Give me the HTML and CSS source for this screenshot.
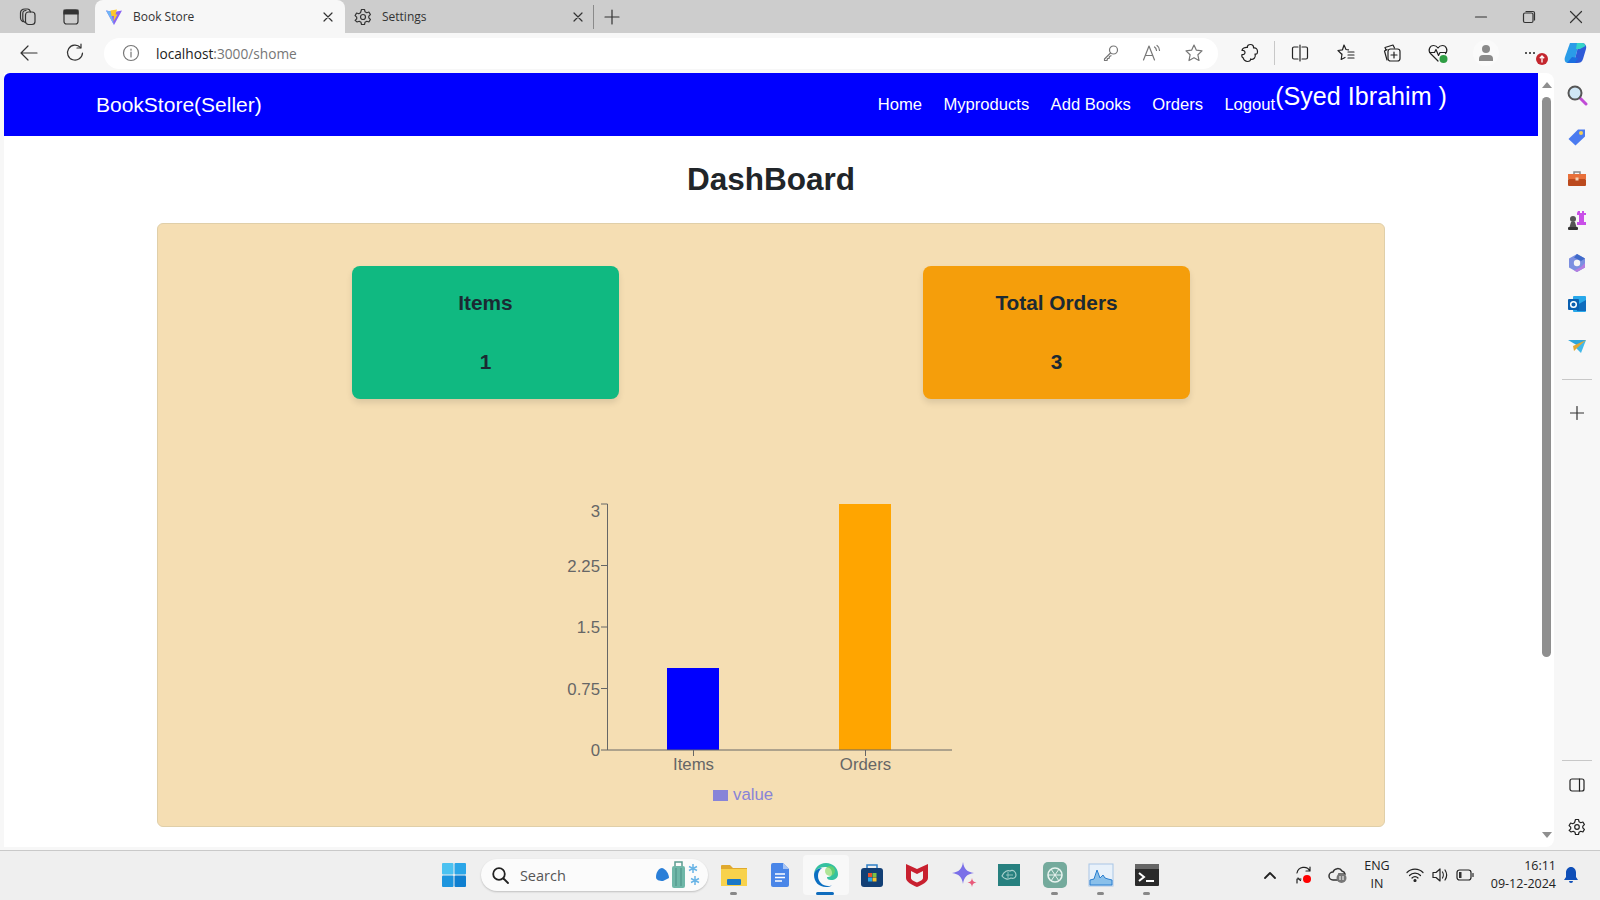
FILE: index.html
```html
<!DOCTYPE html>
<html lang="en">
<head>
    <meta charset="UTF-8">
    <meta name="viewport" content="width=device-width, initial-scale=1.0">
    <title>Book Store</title>
    <link rel="stylesheet" href="styles.css">
</head>
<body>
    <!-- tab strip -->
    <div class="tabstrip">
        <div class="cell-strip first">
            <svg class="ico" width="20" height="20" viewBox="0 0 20 20"><rect x="7.500" y="5" width="9.500" height="12.500" rx="3"/><path d="M7.500 15.500C5.500 15 4.800 13.500 4.800 12V6.500C4.800 4.500 6 3.500 8 3.500"/><path d="M4.500 14.500C3 13.500 2.500 12.500 2.500 11V6C2.500 3.500 4.500 2 7 2h2.500c1.500 0 2.500 1 3 3"/></svg>
        </div>
        <div class="cell-strip">
            <svg class="ico" width="20" height="20" viewBox="0 0 20 20"><rect x="3" y="3" width="14" height="14" rx="2.500"/><rect x="3" y="3" width="14" height="4" fill="#333"/></svg>
        </div>
        <div class="tab active">
            <svg width="18" height="18" viewBox="0 0 18 18"><path d="M1 2.500L9 4l8-1.500L9 17z" fill="#8a63f2"/><path d="M1 2.500L6 3.400 9 17z" fill="#6fb5f5"/><path d="M5.500 2.500L12 1.500 10.500 6.500H12.500L8.500 13.500 9 8H6.500z" fill="#fcc72b"/></svg>
            <span class="tab-title">Book Store</span>
            <svg class="ico tab-close" width="12" height="12" viewBox="0 0 12 12"><path d="M2 2l8 8M10 2l-8 8"/></svg>
        </div>
        <div class="tab">
            <svg class="ico" width="18" height="18" viewBox="0 0 18 18"><path d="M7.500 1.500h3l.5 2.200 1.800 1 2.100-.7 1.500 2.600-1.600 1.500v1.800l1.600 1.500-1.500 2.600-2.100-.7-1.800 1-.5 2.200h-3l-.5-2.200-1.800-1-2.100.7L1.100 12.400l1.600-1.500V9.100L1.100 7.600l1.500-2.600 2.100.7 1.800-1z"/><circle cx="9" cy="9" r="2.500"/></svg>
            <span class="tab-title">Settings</span>
            <svg class="ico tab-close" width="12" height="12" viewBox="0 0 12 12"><path d="M2 2l8 8M10 2l-8 8"/></svg>
        </div>
        <div class="tab-sep"></div>
        <svg class="ico tab-plus" width="16" height="16" viewBox="0 0 16 16"><path d="M8 1v14M1 8h14"/></svg>
        <div class="win-controls">
            <svg class="ico" width="14" height="14" viewBox="0 0 14 14"><path d="M1.500 7h11"/></svg>
            <svg class="ico" width="14" height="14" viewBox="0 0 14 14"><rect x="1.500" y="3" width="9.500" height="9.500" rx="1.500"/><path d="M4 1.500h7a1.500 1.500 0 0 1 1.500 1.500v7"/></svg>
            <svg class="ico" width="14" height="14" viewBox="0 0 14 14"><path d="M1.500 1.500l11 11M12.500 1.500l-11 11"/></svg>
        </div>
    </div>

    <!-- address bar -->
    <div class="toolbar">
        <div class="cell">
            <svg class="ico" width="20" height="20" viewBox="0 0 20 20"><path d="M18 10H2.500M9 3l-7 7 7 7"/></svg>
        </div>
        <div class="cell">
            <svg class="ico" width="20" height="20" viewBox="0 0 20 20"><path d="M15.500 4.500A7.500 7.500 0 1 0 17.500 10"/><path d="M16 1v4h-4"/></svg>
        </div>
        <div class="address">
            <svg class="ico light" width="18" height="18" viewBox="0 0 18 18"><circle cx="9" cy="9" r="7.500"/><path d="M9 8v5M9 5v1.200"/></svg>
            <span class="addr-text"><span class="addr-host">localhost</span>:3000/shome</span>
            <div class="addr-icons">
                <svg class="ico light" width="18" height="18" viewBox="0 0 18 18"><circle cx="11.500" cy="6" r="4"/><path d="M8.500 9L2.500 15v1.500h2.500l.5-2h1.500l.5-2 1.500-.8"/></svg>
                <svg class="ico light" width="20" height="18" viewBox="0 0 20 18"><path d="M1.500 16L7 2l5.500 14M3.500 11.500h7M12.500 3c1.200 .8 1.800 2 2 3.500M15 1.500c1.500 1 2.500 3 2.500 5"/></svg>
                <svg class="ico light" width="20" height="20" viewBox="0 0 20 20"><path d="M10 2l2.400 5.200 5.600.7-4.100 3.900 1.100 5.700L10 14.700l-5 2.800 1.100-5.700L2 7.900l5.600-.7z"/></svg>
            </div>
        </div>
        <div class="cell">
            <svg class="ico dark" width="20" height="20" viewBox="0 0 20 20"><path d="M7.500 4.500C7 2.500 8.500 1.500 10.500 1.500s3.500 1.500 3 3.500c2.500-.5 4 1 4 3.500s-1 3-2.500 2.500c.5 1.500.5 3-.5 4s-2.500 2-4 1c.5 1.500-1 2.500-3 2.500S3 16.500 3.500 15C2 15 1.500 13 2 11.500 3.500 12 5 11 5 9.500S3.500 7 2 7.500C2 5.500 5 4 7.500 4.500z"/></svg>
        </div>
        <div class="tool-sep"></div>
        <div class="cell">
            <svg class="ico dark" width="20" height="20" viewBox="0 0 20 20"><path d="M8 4H4a1.500 1.500 0 0 0-1.500 1.500v9A1.500 1.500 0 0 0 4 16h4M12 4h4a1.500 1.500 0 0 1 1.500 1.500v9A1.500 1.500 0 0 1 16 16h-4M10 2v16"/></svg>
        </div>
        <div class="cell">
            <svg class="ico dark" width="20" height="20" viewBox="0 0 20 20"><path d="M8 2l2 4.500 2.500.3M6 11l-.8 5.500L9 14.500M5.500 11L2 7.500l4.500-.7L8 2M12 9h6M12 12h6M12 15h6"/></svg>
        </div>
        <div class="cell">
            <svg class="ico dark" width="20" height="20" viewBox="0 0 20 20"><path d="M4 7L3 4.500 11 2l1.500 3"/><path d="M5 17L2.500 8 5 6.500"/><rect x="6" y="6" width="12" height="12" rx="2.500"/><path d="M12 9v6M9 12h6"/></svg>
        </div>
        <div class="cell">
            <svg width="22" height="22" viewBox="0 0 22 22" class="ico dark"><path d="M11 19L3.500 11.500C.5 8 3 3.500 6.500 3.500c2 0 3.500 1 4.500 2.500 1-1.500 2.500-2.500 4.500-2.500 3.500 0 6 4.500 3 8"/><path d="M2.500 10.500h5l1.500-3 2.500 6 1.500-3h6"/><circle cx="16.500" cy="17" r="4" fill="#2f9e44" stroke="none"/></svg>
        </div>
        <div class="cell">
            <div class="avatar">
                <svg width="16" height="18" viewBox="0 0 16 18"><circle cx="8" cy="5" r="4" fill="#8a8a8a"/><path d="M1 17v-2a4 4 0 0 1 4-4h6a4 4 0 0 1 4 4v2z" fill="#8a8a8a"/></svg>
            </div>
        </div>
        <div class="cell">
            <span class="more-dots"></span>
            <svg class="more-badge" width="12" height="12" viewBox="0 0 12 12"><circle cx="6" cy="6" r="6" fill="#c4262e"/><path d="M6 9.500V3M3.800 5.200L6 3l2.200 2.200" fill="none" stroke="#fff" stroke-width="1.300"/></svg>
        </div>
        <div class="cell">
            <svg width="26" height="26" viewBox="0 0 26 26"><path d="M7 3h9l-5 20H5C2 23 1 20 2 17z" fill="#2a9ce8"/><path d="M16 3h3c3 0 5 3 4 6l-3 10c-1 3-3 4-6 4h-3z" fill="#2e5bd8"/><path d="M14 3h5c2 0 3 1 3.500 3L17 9h-4z" fill="#35d4c8"/><path d="M4 23h8l3-5-6-1z" fill="#1a6fe0"/></svg>
        </div>
    </div>

    <div class="window-body">
        <div class="page">
            <div class="content">
                <nav class="navbar">
                    <a class="brand">BookStore(Seller)</a>
                    <div class="nav-links">
                        <a>Home</a>
                        <a>Myproducts</a>
                        <a>Add Books</a>
                        <a>Orders</a>
                        <a>Logout</a>
                    </div>
                    <h2 class="nav-user">(Syed Ibrahim )</h2>
                </nav>

                <h1 class="page-title">DashBoard</h1>

                <div class="panel">
                    <div class="cards">
                        <div class="card green">
                            <h3>Items</h3>
                            <h3>1</h3>
                        </div>
                        <div class="card orange">
                            <h3>Total Orders</h3>
                            <h3>3</h3>
                        </div>
                    </div>

                    <svg class="chart" width="440" height="330" viewBox="0 0 440 330">
                        <rect x="137" y="178" width="52" height="82" fill="#0000ff"/>
                        <rect x="309" y="14" width="52" height="246" fill="#ffa500"/>
                        <path d="M77.500 14V260M71 14H77.500M71 75.500H77.500M71 137H77.500M71 198.500H77.500M71 260H422M163.500 260V266M335.500 260V266" stroke="#666" fill="none"/>
                        <g class="tick-y">
                            <text x="70" y="27">3</text>
                            <text x="70" y="82">2.25</text>
                            <text x="70" y="143">1.5</text>
                            <text x="70" y="205">0.75</text>
                            <text x="70" y="266">0</text>
                        </g>
                        <g class="tick-x">
                            <text x="163.500" y="280">Items</text>
                            <text x="335.500" y="280">Orders</text>
                        </g>
                        <rect x="183" y="300" width="15" height="11" fill="#8884d8"/>
                        <text class="legend" x="203" y="310">value</text>
                    </svg>
                </div>
            </div>

            <div class="scrollbar">
                <span class="arrow-up"></span>
                <span class="thumb"></span>
                <span class="arrow-down"></span>
            </div>
        </div>

        <!-- edge sidebar -->
        <aside class="sidebar">
            <div class="side-cell">
                <svg width="22" height="22" viewBox="0 0 22 22"><path d="M13 13l7 7" stroke="#c04bd6" stroke-width="3" stroke-linecap="round"/><circle cx="9" cy="9" r="6.500" fill="#cfe6f5" stroke="#555" stroke-width="2"/></svg>
            </div>
            <div class="side-cell">
                <svg width="20" height="20" viewBox="0 0 20 20"><path d="M1.500 12L11 2.500h7v7L8.500 18.500z" fill="#4b7bf0"/><circle cx="14" cy="6" r="2" fill="#f5cf58"/></svg>
            </div>
            <div class="side-cell">
                <svg width="20" height="20" viewBox="0 0 20 20"><path d="M7 5V3h6v2" fill="none" stroke="#888" stroke-width="1.500"/><rect x="1" y="5" width="18" height="5" fill="#e8703a"/><rect x="1" y="10" width="18" height="7" rx="1" fill="#bb4a1e"/><rect x="8.500" y="8.500" width="3" height="3" fill="#f3d3b8"/></svg>
            </div>
            <div class="side-cell">
                <svg width="22" height="22" viewBox="0 0 22 22"><path d="M13 2h2v2h2V2h2v2h2v2h-2v7h2v3h-9v-3h2V6h-2V4z" fill="#c94fe8" transform="translate(-1 -1)"/><circle cx="7" cy="9" r="3" fill="#555"/><path d="M5 12h4l1.500 5h-7z" fill="#555"/><rect x="2" y="17" width="10" height="3" rx="1" fill="#333"/></svg>
            </div>
            <div class="side-cell">
                <svg width="20" height="20" viewBox="0 0 20 20"><path d="M10 1l8 4.500v9L10 19l-8-4.500v-9z" fill="#7c8fe0"/><path d="M10 1l8 4.500-4 2.500-4-2-3-1.500z" fill="#3f6ac9"/><path d="M18 10v4.500L10 19l-3-1.500 7-3.500z" fill="#b57ee0"/><circle cx="10" cy="10" r="3.200" fill="#f5f5f5"/></svg>
            </div>
            <div class="side-cell">
                <svg width="20" height="20" viewBox="0 0 20 20"><rect x="6" y="2" width="13" height="16" rx="1" fill="#28a8ea"/><path d="M10 11l9-5v11H10z" fill="#0f6cbd"/><rect x="1" y="5" width="11" height="11" rx="1" fill="#0a5fb0"/><circle cx="6.500" cy="10.500" r="2.800" fill="none" stroke="#fff" stroke-width="1.500"/></svg>
            </div>
            <div class="side-cell">
                <svg width="20" height="18" viewBox="0 0 20 18"><path d="M1 3h18L13 10z" fill="#2ea6dc"/><path d="M19 3L8 10l6 6z" fill="#42b8e8"/><path d="M19 3L6 9l1 5 3-3z" fill="#e5a933"/></svg>
            </div>
            <div class="side-line"></div>
            <div class="side-cell">
                <svg class="ico" width="14" height="14" viewBox="0 0 14 14"><path d="M7 .5v13M.5 7h13"/></svg>
            </div>
            <div class="side-bottom">
                <div class="side-line"></div>
                <div class="side-cell">
                    <svg class="ico dark" width="16" height="16" viewBox="0 0 16 16"><rect x="1" y="2" width="14" height="12" rx="2"/><path d="M10.500 2v12"/></svg>
                </div>
                <div class="side-cell">
                    <svg class="ico dark" width="18" height="18" viewBox="0 0 18 18"><path d="M7.500 1.500h3l.5 2.200 1.800 1 2.100-.7 1.500 2.600-1.600 1.500v1.800l1.600 1.500-1.500 2.600-2.100-.7-1.800 1-.5 2.200h-3l-.5-2.200-1.800-1-2.100.7L1.100 12.400l1.600-1.500V9.100L1.100 7.600l1.500-2.600 2.100.7 1.800-1z"/><circle cx="9" cy="9" r="2.300"/></svg>
                </div>
            </div>
        </aside>
    </div>

    <!-- windows taskbar -->
    <footer class="taskbar">
        <div class="app">
            <svg width="24" height="24" viewBox="0 0 24 24"><rect x="0" y="0" width="11.500" height="11.500" rx="1" fill="#4cc2f1"/><rect x="12.500" y="0" width="11.500" height="11.500" rx="1" fill="#2ba6e8"/><rect x="0" y="12.500" width="11.500" height="11.500" rx="1" fill="#1d95de"/><rect x="12.500" y="12.500" width="11.500" height="11.500" rx="1" fill="#0f7fd0"/></svg>
        </div>
        <div class="search">
            <svg class="ico dark thick" width="18" height="18" viewBox="0 0 18 18"><circle cx="8" cy="8" r="5.800"/><path d="M12.500 12.500L17 17"/></svg>
            <span>Search</span>
            <svg class="search-art" width="48" height="32" viewBox="0 0 48 32"><path d="M1 18c0-5 3-9 6-9 4 1 7 6 7 10l-6 3c-4 0-7-1-7-4z" fill="#2a7fd8"/><rect x="17" y="7" width="13" height="22" rx="2" fill="#6fb7a8"/><path d="M20 7V3h7v4" fill="none" stroke="#5b9c90" stroke-width="1.500"/><path d="M21 9v18M26 9v18" stroke="#4a8f84"/><path d="M38 5v9M34 7.500l8 4M42 7.500l-8 4M40 17v9M36 19.500l8 4M44 19.500l-8 4" stroke="#69b4e6" stroke-width="1.500"/></svg>
        </div>
        <div class="app running">
            <svg width="26" height="24" viewBox="0 0 26 24"><path d="M0 3a1 1 0 0 1 1-1h8l3 3h14v17H0z" fill="#e0a92e"/><rect x="0" y="6" width="26" height="17" fill="#f8d24c"/><rect x="6" y="16" width="14" height="6" rx="1" fill="#1a78c8"/></svg>
        </div>
        <div class="app">
            <svg width="18" height="24" viewBox="0 0 18 24"><path d="M2 0h10l6 6v16a2 2 0 0 1-2 2H2a2 2 0 0 1-2-2V2a2 2 0 0 1 2-2z" fill="#4a86e8"/><path d="M12 0l6 6h-6z" fill="#a6c4f5"/><path d="M4 11h10M4 14.500h10M4 18h7" stroke="#fff" stroke-width="1.500"/></svg>
        </div>
        <div class="app current">
            <svg width="26" height="26" viewBox="0 0 26 26"><path d="M1 13C1 6 6 1 13 1c7 0 12 5 12 11 0 4-3 6-7 6-3 0-4-1-4-3 3 0 5-1 5-4 0-4-3-6-7-6-6 0-11 4-11 8z" fill="#35c1a0"/><path d="M1 13c0-4 4-7 8-7-3 2-4 5-4 8 0 6 5 10 10 10 1 0 3 0 4-1-2 2-4 2-6 2C6 25 1 20 1 13z" fill="#0b6fc2"/><circle cx="17" cy="9" r="5" fill="#7ed957" opacity=".6"/></svg>
        </div>
        <div class="app">
            <svg width="24" height="26" viewBox="0 0 24 26"><path d="M7 7V3h10v4" fill="none" stroke="#2f80c8" stroke-width="1.500"/><rect x="1" y="6" width="22" height="19" rx="3" fill="#123f75"/><rect x="8" y="11" width="4" height="4" fill="#e8502e"/><rect x="12.500" y="11" width="4" height="4" fill="#7cc243"/><rect x="8" y="15.500" width="4" height="4" fill="#2ba6e8"/><rect x="12.500" y="15.500" width="4" height="4" fill="#f8c22c"/></svg>
        </div>
        <div class="app">
            <svg width="22" height="26" viewBox="0 0 22 26"><path d="M0 2l11 5 11-5v14c0 4-6 7-11 9C6 23 0 20 0 16z" fill="#c8202f"/><path d="M5 9l6 3 6-3v7c0 2-3 3-6 4.500C8 19 5 18 5 16z" fill="#f0f0f0"/></svg>
        </div>
        <div class="app">
            <svg width="28" height="28" viewBox="0 0 28 28"><path d="M14 1c1 7 4 10 11 11-7 1-10 4-11 11-1-7-4-10-11-11 7-1 10-4 11-11z" fill="#7a6fe8"/><path d="M23 17c.5 3 1.500 4 4.500 4.500-3 .5-4 1.500-4.500 4.500-.5-3-1.500-4-4.500-4.500 3-.5 4-1.500 4.500-4.500z" fill="#e85a7a"/></svg>
        </div>
        <div class="app">
            <svg width="26" height="26" viewBox="0 0 26 26"><rect x="2" y="2" width="22" height="22" fill="#27807f"/><path d="M6 14c2-5 6-6 8-5 3-2 6 1 6 4s-3 4-5 3c-3 2-7 1-9-2z" fill="none" stroke="#a8d0cc" stroke-width="1.200"/><path d="M10 13h7M12 10v6" stroke="#a8d0cc" stroke-width=".8"/></svg>
        </div>
        <div class="app running">
            <svg width="26" height="28" viewBox="0 0 26 28"><rect x="1" y="1" width="24" height="26" rx="5" fill="#74aa9c"/><circle cx="13" cy="14" r="7" fill="none" stroke="#e8f3ef" stroke-width="1.600"/><path d="M9 8l8 12M17 8l-8 12M6 14h14" stroke="#e8f3ef"/></svg>
        </div>
        <div class="app running">
            <svg width="26" height="24" viewBox="0 0 26 24"><rect x="1" y="1" width="24" height="22" fill="#e8f1fa" stroke="#a9c6e6"/><path d="M2 22V17l4-1 3-9 3 8 3-3 2 3 3 1 4 1v5z" fill="#8ac0ea" stroke="#2a7fd0"/></svg>
        </div>
        <div class="app running">
            <svg width="26" height="24" viewBox="0 0 26 24"><rect x="1" y="1" width="24" height="22" rx="1" fill="#2b2b2b"/><rect x="1" y="1" width="24" height="5" fill="#666"/><path d="M5 10l5 4-5 4" fill="none" stroke="#fff" stroke-width="2"/><path d="M12 18h8" stroke="#fff" stroke-width="2"/></svg>
        </div>

        <div class="tray">
            <div class="tray-cell">
                <svg class="ico dark thick" width="14" height="10" viewBox="0 0 14 10"><path d="M2 8l5-5 5 5"/></svg>
            </div>
            <div class="tray-cell">
                <svg class="ico dark" width="20" height="20" viewBox="0 0 20 20"><path d="M3 8a7 7 0 0 1 13-2M16 2v4h-4M4 13c.5 1 1.500 2 2.500 2.500M3 18v-4h4"/><circle cx="13" cy="14" r="4" fill="#f00" stroke="none"/></svg>
            </div>
            <div class="tray-cell">
                <svg width="20" height="18" viewBox="0 0 20 18"><path d="M5 14a4 4 0 0 1 0-8 5 5 0 0 1 9-1 4 4 0 0 1 3 3H11v6z" fill="none" stroke="#333" stroke-width="1.500"/><circle cx="13.500" cy="12" r="5" fill="#777"/><path d="M12 10v4M15 10v4" stroke="#fff"/></svg>
            </div>
            <div class="lang">ENG<br>IN</div>
            <div class="tray-icons">
                <svg class="ico dark" width="18" height="16" viewBox="0 0 18 16"><path d="M1 5.500a11 11 0 0 1 16 0M3.500 8.500a7.500 7.500 0 0 1 11 0M6 11a4 4 0 0 1 6 0"/><circle cx="9" cy="13.500" r="1" fill="#333"/></svg>
                <svg class="ico dark" width="18" height="16" viewBox="0 0 18 16"><path d="M2 5.500h3L9 2v12l-4-3.500H2zM11.500 5c1 1.500 1 4.500 0 6M14 3c2 3 2 7 0 10"/></svg>
                <svg class="ico dark" width="18" height="12" viewBox="0 0 18 12"><rect x="1" y="1" width="14" height="10" rx="2.500"/><rect x="3" y="3" width="2.500" height="6" fill="#333" stroke="none"/><path d="M17 4.500v3"/></svg>
            </div>
            <div class="clock">16:11<br>09-12-2024</div>
            <div class="bell">
                <svg width="14" height="18" viewBox="0 0 14 18"><path d="M7 1c3 0 5 2.500 5 5.500V11l2 3H0l2-3V6.500C2 3.500 4 1 7 1z" fill="#0f4fb8"/><path d="M5 15h4a2 2 0 0 1-4 0z" fill="#0f4fb8"/></svg>
            </div>
        </div>
    </footer>
</body>
</html>
```

FILE: styles.css
```css
*{
    box-sizing: border-box;
}
html, body{
    margin: 0;
    height: 100%;
    overflow: hidden;
}
body{
    width: 1600px;
    height: 900px;
    display: flex;
    flex-direction: column;
    font-family: "Liberation Sans", Arial, sans-serif;
    background-color: #f7f7f7;
}
.ico{
    fill: none;
    stroke: #333;
    stroke-width: 1.2;
    stroke-linecap: round;
    stroke-linejoin: round;
}
.ico.light{
    stroke: #777;
}
.ico.dark{
    stroke: #222;
}
.ico.thick{
    stroke-width: 1.8;
}

/* tab strip */
.tabstrip{
    height: 33px;
    flex-shrink: 0;
    display: flex;
    align-items: center;
    background-color: #cdcdcd;
    font-family: "Open Sans", sans-serif;
    font-size: 12px;
    color: #333;
}
.cell-strip{
    width: 43px;
    display: flex;
    justify-content: center;
}
.cell-strip.first{
    margin-left: 6px;
}
.tab{
    width: 250px;
    height: 33px;
    display: flex;
    align-items: center;
    padding-left: 9px;
    gap: 10px;
}
.tab.active{
    margin-left: 3px;
    background-color: #f7f7f7;
    border-radius: 8px 8px 0 0;
    padding-left: 10px;
}
.tab-title{
    flex: 1;
}
.tab-close{
    margin-right: 11px;
}
.tab-sep{
    width: 1px;
    height: 24px;
    background-color: #8a8a8a;
    margin-left: -2px;
}
.tab-plus{
    margin-left: 10px;
}
.win-controls{
    margin-left: auto;
    width: 126px;
    display: flex;
    justify-content: space-between;
    padding-right: 17px;
}

/* address bar */
.toolbar{
    height: 40px;
    flex-shrink: 0;
    display: flex;
    align-items: center;
    padding-left: 6px;
    background-color: #f7f7f7;
}
.cell{
    width: 46px;
    height: 40px;
    flex-shrink: 0;
    display: flex;
    align-items: center;
    justify-content: center;
    position: relative;
}
.address{
    width: 1114px;
    height: 31px;
    margin-left: 6px;
    margin-right: 9px;
    display: flex;
    align-items: center;
    padding-left: 18px;
    background-color: #fff;
    border-radius: 16px;
    font-family: "Open Sans", sans-serif;
    font-size: 13.7px;
    color: #767676;
}
.addr-text{
    margin-left: 16px;
}
.addr-host{
    color: #222;
}
.addr-icons{
    margin-left: auto;
    width: 119px;
    display: flex;
    justify-content: space-between;
    align-items: center;
    padding-right: 14px;
    padding-left: 3px;
}
.tool-sep{
    width: 1px;
    height: 24px;
    background-color: #c8c8c8;
    margin: 0 2px 0 1px;
    flex-shrink: 0;
}
.avatar{
    width: 26px;
    height: 26px;
    margin-left: 3px;
    border-radius: 50%;
    background-color: #fafafa;
    display: flex;
    align-items: center;
    justify-content: center;
}
.more-dots{
    width: 2px;
    height: 2px;
    background-color: #222;
    border-radius: 50%;
    box-shadow: 4px 0 0 #222, -4px 0 0 #222;
}
.more-badge{
    position: absolute;
    left: 29px;
    top: 20px;
}

/* page */
.window-body{
    flex: 1;
    min-height: 0;
    display: flex;
}
.page{
    width: 1550px;
    height: 774px;
    margin-left: 4px;
    display: flex;
    background-color: #fff;
    border-radius: 0 8px 8px 0;
}
.content{
    width: 1534px;
    overflow: hidden;
}
.navbar{
    height: 63px;
    display: flex;
    align-items: center;
    padding: 0 91px 0 92px;
    background-color: #0000ff;
    color: #fff;
    border-radius: 6px 0 0 0;
}
.brand{
    font-size: 21px;
    margin-right: auto;
}
.nav-links{
    display: flex;
    gap: 21.4px;
    font-size: 16.6px;
}
.nav-user{
    margin: 0 0 16px 0;
    font-size: 25.15px;
    font-weight: normal;
}
.page-title{
    margin: 0;
    height: 87px;
    padding-top: 24px;
    text-align: center;
    font-size: 31.5px;
    line-height: 38px;
    color: #212529;
}
.panel{
    width: 1228px;
    height: 604px;
    margin: 0 auto;
    padding-top: 42px;
    background-color: #f5deb3;
    border: 1px solid #e0cfa9;
    border-radius: 6px;
}
.cards{
    display: flex;
    justify-content: center;
    gap: 304px;
}
.card{
    width: 267px;
    height: 133px;
    border-radius: 8px;
    box-shadow: 0 4px 6px rgba(0, 0, 0, .1);
    color: #1b2a33;
    text-align: center;
    padding-top: 25px;
}
.card h3{
    margin: 0 0 34px 0;
    font-size: 20.8px;
    line-height: 24px;
    font-weight: bold;
}
.card.green{
    background-color: #10b981;
}
.card.orange{
    background-color: #f59e0b;
}
.card h3 + h3{
    padding-top: 1px;
}
.chart{
    display: block;
    margin: 91px 0 0 372px;
    font-size: 16.8px;
    fill: #666;
}
.tick-y text{
    text-anchor: end;
}
.tick-x text{
    text-anchor: middle;
}
.legend{
    fill: #8884d8;
}

/* page scrollbar */
.scrollbar{
    width: 16px;
    position: relative;
}
.thumb{
    position: absolute;
    left: 4px;
    top: 24px;
    width: 9px;
    height: 560px;
    border-radius: 5px;
    background-color: #8f8f8f;
}
.arrow-up, .arrow-down{
    position: absolute;
    left: 4px;
    width: 0;
    height: 0;
    border-left: 5px solid transparent;
    border-right: 5px solid transparent;
}
.arrow-up{
    top: 9px;
    border-bottom: 6px solid #8f8f8f;
}
.arrow-down{
    bottom: 9px;
    border-top: 6px solid #8f8f8f;
}

/* edge sidebar */
.sidebar{
    width: 46px;
    height: 777px;
    display: flex;
    flex-direction: column;
    align-items: center;
    padding-top: 1.5px;
}
.side-cell{
    height: 41.8px;
    display: flex;
    align-items: center;
    justify-content: center;
}
.side-line{
    width: 30px;
    height: 1px;
    margin: 12px 0;
    background-color: #c8c8c8;
}
.side-bottom{
    margin-top: auto;
    display: flex;
    flex-direction: column;
    align-items: center;
    padding-bottom: 2px;
}
.side-bottom .side-line{
    margin: 0 0 3px 0;
}

/* windows taskbar */
.taskbar{
    height: 50px;
    flex-shrink: 0;
    display: flex;
    align-items: center;
    padding-left: 431px;
    padding-bottom: 1px;
    background-color: #efefef;
    border-top: 1px solid #c9c9c9;
}
.app{
    width: 45.9px;
    height: 40px;
    flex-shrink: 0;
    display: flex;
    align-items: center;
    justify-content: center;
    position: relative;
}
.app.running::after{
    content: "";
    position: absolute;
    left: 19px;
    bottom: 0;
    width: 7px;
    height: 3px;
    border-radius: 2px;
    background-color: #888;
}
.app.current{
    background-color: #f8f8f8;
    border-radius: 4px;
}
.app.current::after{
    content: "";
    position: absolute;
    left: 13px;
    bottom: 0;
    width: 18px;
    height: 3px;
    border-radius: 2px;
    background-color: #0f6cbd;
}
.search{
    width: 227px;
    height: 32px;
    margin: 0 3px 0 4px;
    flex-shrink: 0;
    display: flex;
    align-items: center;
    padding-left: 10px;
    gap: 11px;
    background-color: #fbfbfb;
    border-radius: 16px;
    box-shadow: 0 1px 2px rgba(0, 0, 0, .2);
    font-family: "Open Sans", sans-serif;
    font-size: 14.5px;
    color: #555;
}
.search-art{
    margin-left: auto;
    margin-right: 5px;
}
.tray{
    margin-left: auto;
    display: flex;
    align-items: center;
    padding-right: 14px;
    font-family: "Open Sans", sans-serif;
    font-size: 12.5px;
    line-height: 18px;
    color: #222;
}
.tray-cell{
    width: 34px;
    display: flex;
    justify-content: center;
}
.lang{
    width: 44px;
    text-align: center;
}
.tray-icons{
    width: 72px;
    margin-right: 4px;
    margin-left: 3px;
    display: flex;
    justify-content: space-between;
    align-items: center;
    padding-left: 4px;
}
.clock{
    width: 78px;
    text-align: right;
}
.bell{
    width: 30px;
    display: flex;
    justify-content: center;
}
```
